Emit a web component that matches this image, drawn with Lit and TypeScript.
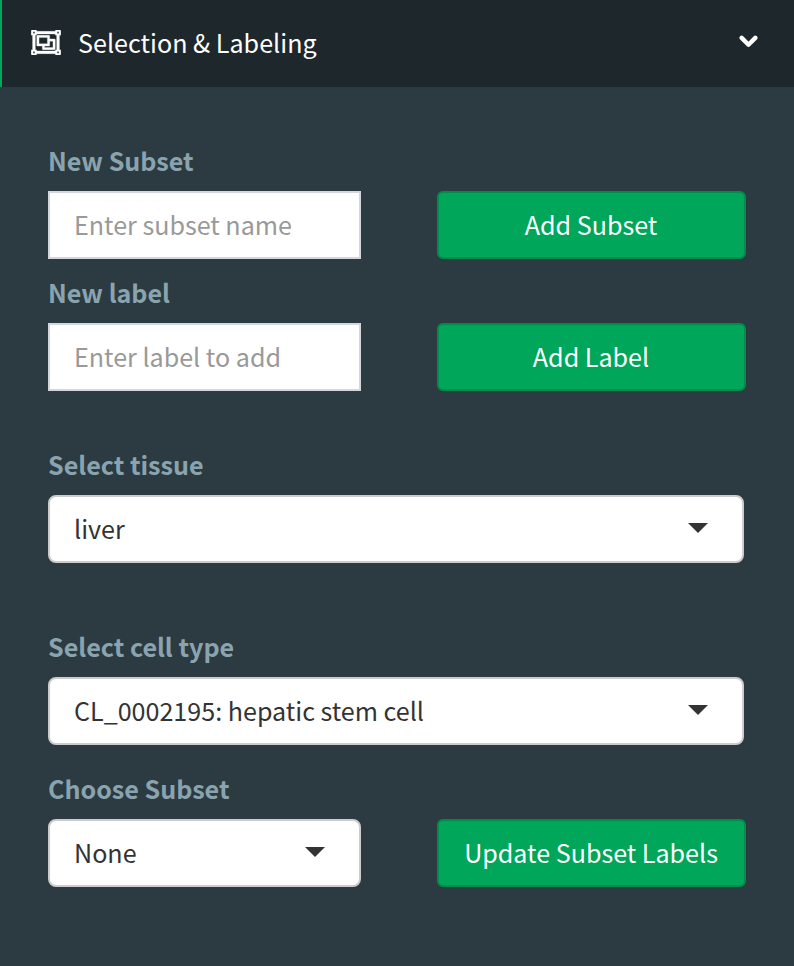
import { LitElement, html, css } from "lit";
import { customElement } from "lit/decorators.js";

@customElement("app-root")
export class AppRoot extends LitElement {
  static styles = css`
    :host {
      display: block;
      min-height: 966px;
      background: #2c3b41;
      font-family: "Source Sans Pro", "Noto Sans CJK SC", sans-serif;
      font-size: 25.1px;
      line-height: 40px;
      color: #333;
    }
    * {
      box-sizing: border-box;
    }
    .header {
      display: flex;
      align-items: center;
      height: 87px;
      padding: 0 36px 0 29px;
      background: #1e282c;
      border-left: 2px solid #00a65a;
      color: #fff;
    }
    .group-icon {
      width: 30px;
      height: 25px;
      margin: 0 17px 2px 0;
      fill: currentColor;
      stroke: currentColor;
      stroke-width: 5;
    }
    .title {
      flex: 1;
      margin-bottom: 4px;
      letter-spacing: 0.02px;
    }
    .chevron {
      width: 19px;
      height: 13px;
      margin-bottom: 5px;
      fill: none;
      stroke: currentColor;
      stroke-width: 4.4;
      stroke-linecap: round;
      stroke-linejoin: round;
    }
    .form {
      padding: 53px 48px 0;
    }
    .row {
      display: flex;
      align-items: flex-end;
      justify-content: space-between;
      margin-bottom: 13px;
    }
    .row.spaced {
      margin-bottom: 53px;
    }
    .row.wide {
      width: 696px;
      margin-bottom: 63px;
    }
    .row.tight {
      width: 696px;
      margin-bottom: 23px;
    }
    .field {
      width: 313px;
    }
    .wide .field,
    .tight .field {
      width: 100%;
    }
    label {
      display: block;
      margin-bottom: 11px;
      font-weight: 700;
      color: #8aa4af;
    }
    .input,
    .select {
      display: flex;
      align-items: center;
      width: 100%;
      height: 68px;
      padding: 0 24px 2px;
      background: #fff;
      border: 2px solid #d2d6de;
      font: inherit;
      outline: none;
    }
    .input::placeholder {
      color: #999;
      opacity: 1;
    }
    .select {
      justify-content: space-between;
      padding-right: 34px;
      border-color: #ccc;
      border-radius: 8px;
    }
    .caret {
      border: 10px solid transparent;
      border-top-color: #333;
      border-bottom: 0;
    }
    .button {
      width: 309px;
      height: 68px;
      padding: 0 1px 2px 0;
      background: #00a65a;
      border: 2px solid #008d4c;
      border-radius: 6px;
      color: #fff;
      font: inherit;
    }
  `;

  private input(label: string, placeholder: string) {
    return html`<div class="field">
      <label>${label}</label>
      <input class="input" placeholder=${placeholder} />
    </div>`;
  }

  private select(label: string, value: string) {
    return html`<div class="field">
      <label>${label}</label>
      <div class="select"><span>${value}</span><i class="caret"></i></div>
    </div>`;
  }

  render() {
    return html`
      <div class="header">
        <svg class="group-icon" viewBox="-3 32 518 448" preserveAspectRatio="none">
          <path
            d="M500 128c6.627 0 12-5.373 12-12V44c0-6.627-5.373-12-12-12h-72c-6.627 0-12 5.373-12 12v12H96V44c0-6.627-5.373-12-12-12H12C5.373 32 0 37.373 0 44v72c0 6.627 5.373 12 12 12h12v256H12c-6.627 0-12 5.373-12 12v72c0 6.627 5.373 12 12 12h72c6.627 0 12-5.373 12-12v-12h320v12c0 6.627 5.373 12 12 12h72c6.627 0 12-5.373 12-12v-72c0-6.627-5.373-12-12-12h-12V128h12zm-52-64h32v32h-32V64zM32 64h32v32H32V64zm32 384H32v-32h32v32zm416 0h-32v-32h32v32zm-40-64h-12c-6.627 0-12 5.373-12 12v12H96v-12c0-6.627-5.373-12-12-12H72V128h12c6.627 0 12-5.373 12-12v-12h320v12c0 6.627 5.373 12 12 12h12v256zm-36-192h-84v-52c0-6.628-5.373-12-12-12H108c-6.627 0-12 5.372-12 12v168c0 6.628 5.373 12 12 12h84v52c0 6.628 5.373 12 12 12h200c6.627 0 12-5.372 12-12V204c0-6.628-5.373-12-12-12zm-268-24h144v112H136V168zm240 176H232v-24h76c6.627 0 12-5.372 12-12v-76h56v112z"
          />
        </svg>
        <span class="title">Selection &amp; Labeling</span>
        <svg class="chevron" viewBox="0 0 19 13">
          <path d="M2.7 2.9 9.5 9.7 16.3 2.9" />
        </svg>
      </div>
      <div class="form">
        <div class="row">
          ${this.input("New Subset", "Enter subset name")}
          <button class="button">Add Subset</button>
        </div>
        <div class="row spaced">
          ${this.input("New label", "Enter label to add")}
          <button class="button">Add Label</button>
        </div>
        <div class="row wide">${this.select("Select tissue", "liver")}</div>
        <div class="row tight">
          ${this.select("Select cell type", "CL_0002195: hepatic stem cell")}
        </div>
        <div class="row">
          ${this.select("Choose Subset", "None")}
          <button class="button">Update Subset Labels</button>
        </div>
      </div>
    `;
  }
}
